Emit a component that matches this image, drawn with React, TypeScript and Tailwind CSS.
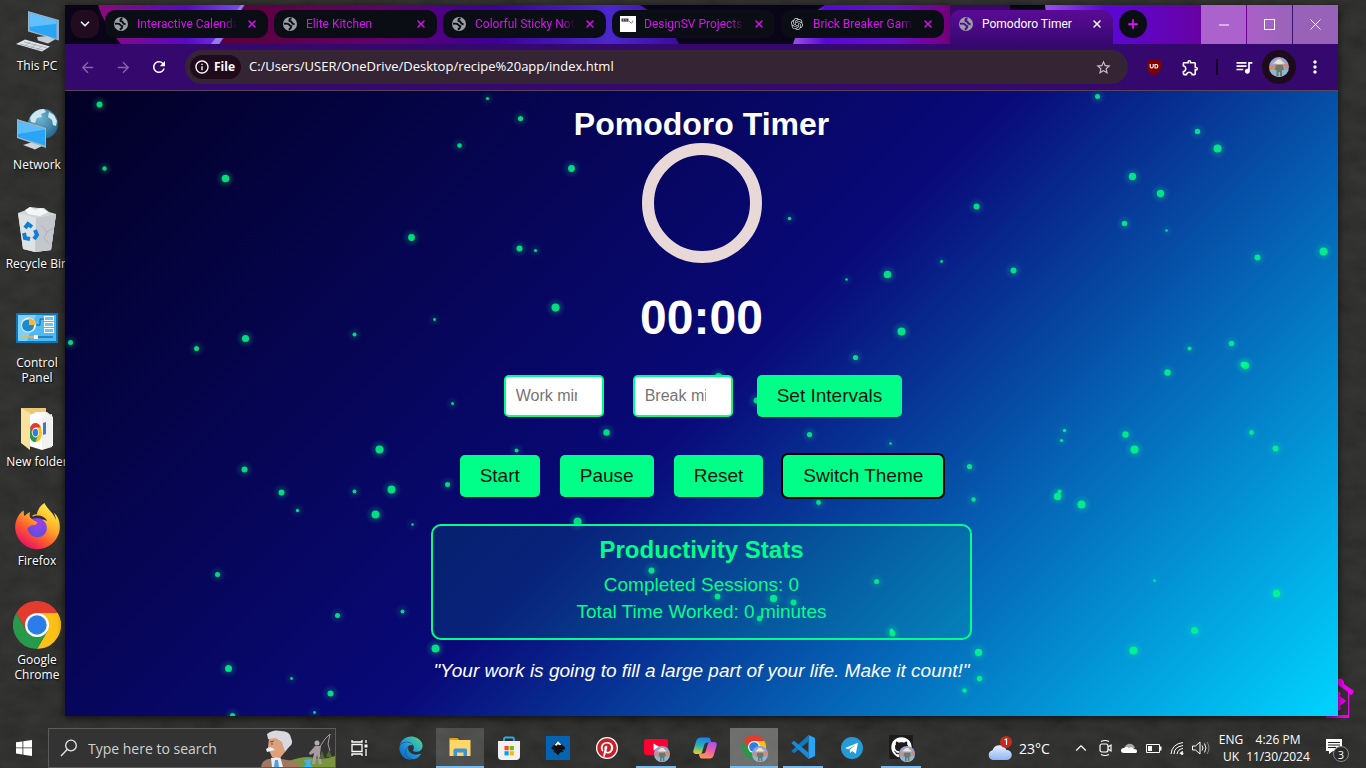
import React from "react";
import {
  MdArrowBack,
  MdArrowForward,
  MdRefresh,
  MdStarBorder,
  MdOutlineExtension,
  MdQueueMusic,
  MdMoreVert,
  MdInfoOutline,
} from "react-icons/md";
import { FaEdge, FaFirefoxBrowser, FaGithub, FaPinterest } from "react-icons/fa";
import { SiOpenai } from "react-icons/si";
import { ChevronDown, ChevronUp, Minus, Plus, Square, X } from "lucide-react";

/* ---------- Shared drawings ---------- */

function ChromeLogo({ className }: { className: string }) {
  return (
    <svg viewBox="0 0 48 48" className={className} aria-hidden="true">
      <path d="M3.2 12A24 24 0 0 1 44.8 12L24 12 13.6 30Z" fill="#e33b2e" />
      <path d="M44.8 12A24 24 0 0 1 24 48L34.4 30 24 12Z" fill="#fbc116" />
      <path d="M24 48A24 24 0 0 1 3.2 12L13.6 30 34.4 30Z" fill="#27994a" />
      <circle cx="24" cy="24" r="12" fill="#fff" />
      <circle cx="24" cy="24" r="9.7" fill="#2b7de9" />
    </svg>
  );
}

function Avatar({ className }: { className: string }) {
  return (
    <svg viewBox="0 0 20 20" className={className} aria-hidden="true">
      <defs>
        <clipPath id="avatarClip">
          <circle cx="10" cy="10" r="10" />
        </clipPath>
      </defs>
      <g clipPath="url(#avatarClip)">
        <rect width="20" height="20" fill="#94a3d8" />
        <rect y="13" width="20" height="7" fill="#8fb5cf" />
        <ellipse cx="3.5" cy="10" rx="3" ry="2" fill="#e08a58" />
        <ellipse cx="17" cy="9" rx="2.5" ry="2" fill="#e08a58" />
        <path d="M7 8h6.500l1.500 5h-2v6h-2v-4h-1.500v4h-2v-6h-2z" fill="#6b7a68" />
        <path d="M8 5.500h4v2.500H8z" fill="#c79c76" />
        <path d="M3.500 6.200C6 5.500 7.500 4.500 8 2.500h4c.5 2 2 3 4.500 3.700-3 1-10 1-13 0z" fill="#f0e2c8" />
      </g>
    </svg>
  );
}

/* ---------- Desktop icons ---------- */

function ThisPcIcon() {
  return (
    <svg viewBox="0 0 48 48" className="size-12" aria-hidden="true">
      <path d="M15 4l31 9v20.500L15 24.500z" fill="#9db4c6" />
      <path d="M16.500 5.500l27 8.300v18L16.500 23.500z" fill="#2aa5f5" />
      <path d="M16.500 5.500l27 8.300v3L16.500 20z" fill="#63c0fa" />
      <path d="M24 30l10-1 8 3.500-7 4-10-3z" fill="#c3ccd6" />
      <path d="M3 37l9-4.500 25 7-8 5z" fill="#dfe3e8" />
      <path d="M7 37l23 6M11 35l23 6M12 39l5-4M18 41l5-4M24 43l5-4" stroke="#9aa3ad" strokeWidth="0.800" />
    </svg>
  );
}

function NetworkIcon() {
  return (
    <svg viewBox="0 0 48 48" className="size-12" aria-hidden="true">
      <defs>
        <radialGradient id="globe" cx="0.400" cy="0.300" r="0.800">
          <stop offset="0" stopColor="#6fb6d2" />
          <stop offset="1" stopColor="#1d5f88" />
        </radialGradient>
      </defs>
      <circle cx="30" cy="18" r="15" fill="url(#globe)" />
      <path d="M17 12c3-6 9-9 14-9l2 3-5 2 1 3-5 1-2 5-4-1zM36 6l5 3 3 6-1 5-3-1-1-5-4-3z" fill="#cfe8f0" />
      <path d="M4 13l29 9v20L4 32z" fill="#9db4c6" />
      <path d="M5 15l27 8.500v16L5 31z" fill="#2aa5f5" />
      <path d="M5 15l27 8.500L5 28z" fill="#5cbcf9" />
      <path d="M10 39l8-2.500 11 3.500-7 3.500z" fill="#cdd4dc" />
    </svg>
  );
}

function RecycleIcon() {
  return (
    <svg viewBox="0 0 48 48" className="size-12" aria-hidden="true">
      <path d="M5 8l8-3 4-3 8 1 6 0 5 4 7 2-5 36-16 2-12-3z" fill="#d3d6d9" />
      <path d="M5 8l18 5 20-4-5 36-16 2-12-3z" fill="#dfe2e5" />
      <path d="M23 13l20-4-5 36-16 2z" fill="#c4c8cc" />
      <path d="M12 5l5-3 5 3 6-2 7 4-8 4-12-2z" fill="#f5f6f7" />
      <path d="M28 20l6 7-3 6 5 6M34 27l6-4" stroke="#adb3b9" fill="none" />
      <g fill="none" stroke="#0e7fd6" strokeWidth="4">
        <path d="M12 23l3-4 4 3" />
        <path d="M22 25l2 5-3 4" />
        <path d="M17 34l-5-1-1-5" />
      </g>
    </svg>
  );
}

function ControlPanelIcon() {
  return (
    <svg viewBox="0 0 48 48" className="size-12" aria-hidden="true">
      <rect x="3" y="9" width="42" height="30" fill="#0f76b6" />
      <rect x="5" y="11" width="38" height="26" fill="#4fb9f1" />
      <path d="M5 11h18L14 37H5z" fill="#7fd0f8" />
      <circle cx="15.500" cy="21" r="7.500" fill="#e8f6fd" />
      <circle cx="15" cy="21.500" r="6" fill="#1b8ad0" />
      <path d="M16 21v-7a7 7 0 0 1 6.500 7z" fill="#ffb52e" />
      <path d="M23 21h4v-6h4" stroke="#0f5f9a" fill="none" />
      <g fill="#fff">
        <rect x="31" y="12" width="10" height="5" />
        <rect x="31" y="18" width="10" height="5" />
        <rect x="31" y="24" width="10" height="5" />
      </g>
      <g fill="#6fc4f2">
        <rect x="32" y="13" width="8" height="3" />
        <rect x="32" y="19" width="8" height="3" />
        <rect x="32" y="25" width="8" height="3" />
      </g>
      <path d="M9 33h12" stroke="#ffb52e" strokeWidth="1.500" />
      <path d="M21 33h19" stroke="#0f5f9a" strokeWidth="1.200" />
      <rect x="21" y="31" width="4" height="4" fill="#fff" />
    </svg>
  );
}

function FolderIcon() {
  return (
    <svg viewBox="0 0 48 48" className="size-12" aria-hidden="true">
      <path d="M8 5h25v34H8z" fill="#e9c978" />
      <path d="M22 9h12l6 5v29H22z" fill="#f7f7f5" />
      <path d="M16 12l9-3 4 5v33l-13-4z" fill="#fff" />
      <path d="M29 14l10-3v33l-10 3z" fill="#f1f1ef" />
      <path d="M30 20l3-1v12l-3 1z" fill="#3f78c6" />
      <g transform="translate(16 20) scale(0.270 0.400)">
        <path d="M3.200 12A24 24 0 0 1 44.800 12L24 12 13.600 30Z" fill="#e33b2e" />
        <path d="M44.800 12A24 24 0 0 1 24 48L34.400 30 24 12Z" fill="#fbc116" />
        <path d="M24 48A24 24 0 0 1 3.200 12L13.600 30 34.400 30Z" fill="#27994a" />
        <circle cx="24" cy="24" r="12" fill="#fff" />
        <circle cx="24" cy="24" r="9.700" fill="#2b7de9" />
      </g>
      <path d="M8 5l9 5v37l-9-7z" fill="#fbe29c" />
    </svg>
  );
}

function FirefoxIcon() {
  return (
    <span className="grid size-12 place-items-center">
      <svg viewBox="0 0 48 48" className="col-start-1 row-start-1 size-12" aria-hidden="true">
        <defs>
          <linearGradient id="foxFill" x1="0.850" y1="0.100" x2="0.250" y2="1">
            <stop offset="0" stopColor="#fff04a" />
            <stop offset="0.350" stopColor="#ffb02a" />
            <stop offset="0.650" stopColor="#ff5a2f" />
            <stop offset="1" stopColor="#e60a6a" />
          </linearGradient>
          <radialGradient id="foxCore" cx="0.600" cy="0.200" r="0.900">
            <stop offset="0" stopColor="#a33be8" />
            <stop offset="1" stopColor="#4457d8" />
          </radialGradient>
        </defs>
        <circle cx="24" cy="27" r="11" fill="url(#foxCore)" />
      </svg>
      <FaFirefoxBrowser className="col-start-1 row-start-1 size-[47px]" fill="url(#foxFill)" />
    </span>
  );
}

const desktopIcons: { label: string; icon: React.ReactNode }[] = [
  { label: "This PC", icon: <ThisPcIcon /> },
  { label: "Network", icon: <NetworkIcon /> },
  { label: "Recycle Bin", icon: <RecycleIcon /> },
  { label: "Control Panel", icon: <ControlPanelIcon /> },
  { label: "New folder", icon: <FolderIcon /> },
  { label: "Firefox", icon: <FirefoxIcon /> },
  { label: "Google Chrome", icon: <ChromeLogo className="size-12" /> },
];

function DesktopColumn() {
  return (
    <aside className="flex w-[65px] shrink-0 flex-col overflow-hidden">
      {desktopIcons.map((item) => (
        <div key={item.label} className="flex h-[99px] w-[74px] shrink-0 flex-col items-center gap-[3px] pt-[7px]">
          {item.icon}
          <span
            className={
              "text-center text-[12px] leading-[15px] text-white [text-shadow:1px_1px_2px_#000] " +
              (item.label === "Control Panel" || item.label === "Google Chrome" ? "w-12" : "whitespace-nowrap")
            }
          >
            {item.label}
          </span>
        </div>
      ))}
    </aside>
  );
}

/* ---------- Browser window ---------- */

function GlobeFavicon({ land }: { land: string }) {
  return (
    <svg viewBox="0 0 16 16" className="size-4 shrink-0" fill="none" stroke={land} aria-hidden="true">
      <circle cx="8" cy="8" r="7" fill="#9b9da6" stroke="none" />
      <path d="M9.500 2.200Q6.800 3 7.600 5q1.400.2 2.200 1.400.4 1.600 2.800 1.800" strokeWidth="2" />
      <path d="M2 7.800q4-.6 5.400 1 .6 1.200 2 1.400-.2 2.400-2.600 3.400" strokeWidth="1.900" />
    </svg>
  );
}

function DesignFavicon() {
  return (
    <svg viewBox="0 0 16 16" className="size-4 shrink-0" aria-hidden="true">
      <rect width="16" height="16" fill="#fff" />
      <path d="M1.500 2.500h7v3.200h-7z" fill="#4a3f52" />
      <path d="M3.500 2.500v3.200M6 2.500v3.200" stroke="#c8a8c8" strokeWidth="0.700" />
      <path d="M9 5l2.500 2.500L13 4.500" stroke="#a08ab0" fill="none" />
    </svg>
  );
}

const globeIcon = <GlobeFavicon land="#0a0d14" />;

const tabs: { title: string; icon: React.ReactNode }[] = [
  { title: "Interactive Calendar", icon: globeIcon },
  { title: "Elite Kitchen", icon: globeIcon },
  { title: "Colorful Sticky Notes", icon: globeIcon },
  { title: "DesignSV Projects", icon: <DesignFavicon /> },
  { title: "Brick Breaker Game", icon: <SiOpenai className="mx-[2px] size-3 shrink-0 text-[#d8d8d8]" /> },
];

function TabStripArt() {
  return (
    <svg className="absolute inset-0 h-full w-full" viewBox="0 0 1273 39" preserveAspectRatio="none" aria-hidden="true">
      <defs>
        <linearGradient id="stripA" x1="0" x2="1">
          <stop offset="0" stopColor="#8c0a78" />
          <stop offset="0.600" stopColor="#5a08c8" />
          <stop offset="1" stopColor="#7a50f0" />
        </linearGradient>
        <linearGradient id="stripB" x1="0" x2="1">
          <stop offset="0" stopColor="#5c0036" />
          <stop offset="0.350" stopColor="#62006c" />
          <stop offset="0.600" stopColor="#3c0098" />
          <stop offset="0.850" stopColor="#4a28cc" />
          <stop offset="1" stopColor="#3c0aa0" />
        </linearGradient>
        <linearGradient id="stripC" x1="0" x2="1">
          <stop offset="0" stopColor="#9a50e8" />
          <stop offset="0.180" stopColor="#5608d8" />
          <stop offset="0.550" stopColor="#6410c8" />
          <stop offset="0.800" stopColor="#780090" />
          <stop offset="1" stopColor="#5c0030" />
        </linearGradient>
        <linearGradient id="stripD" x1="0" x2="1">
          <stop offset="0" stopColor="#9a50f0" />
          <stop offset="0.200" stopColor="#5a08d8" />
          <stop offset="0.600" stopColor="#6a0098" />
          <stop offset="1" stopColor="#780070" />
        </linearGradient>
      </defs>
      <rect width="1273" height="39" fill="#0a0418" />
      <path d="M33 0H180L155 39H56Q38 18 33 0z" fill="url(#stripA)" />
      <path d="M179 0l-25 39h-8l30-39z" fill="#9a78f0" />
      <path d="M180 0H575Q604 18 614 39H155z" fill="url(#stripB)" />
      <path d="M728 39Q735 15 760 0H910L890 39z" fill="url(#stripC)" />
      <path d="M885 0h60v39h-60z" fill="#3a0668" />
      <path d="M980 0H1273V39H985z" fill="url(#stripD)" />
      <path d="M1183 0h90v39h-70Q1196 14 1183 0z" fill="#3c1470" />
    </svg>
  );
}

function TabStrip() {
  return (
    <div className="relative h-[39px] overflow-hidden">
      <TabStripArt />
      <div className="relative flex h-full pl-[6px]">
        <button
          type="button"
          aria-label="Search tabs"
          className="mt-[5px] mr-[6px] grid size-7 shrink-0 place-items-center rounded-[10px] bg-[#210b1e] text-[#d9f3ee]"
        >
          <ChevronDown className="size-[14px]" strokeWidth={3} />
        </button>
        {tabs.map((tab) => (
          <div
            key={tab.title}
            className="mt-[5px] mr-[6px] flex h-7 w-[163px] min-w-0 items-center rounded-[10px] bg-[#0a0d14] px-2 text-[#d511ef]"
          >
            {tab.icon}
            <span className="ml-2 w-[100px] overflow-hidden font-[Roboto,sans-serif] text-[12px] whitespace-nowrap [mask-image:linear-gradient(to_right,black_86%,transparent)]">
              {tab.title}
            </span>
            <button type="button" aria-label={"Close " + tab.title} className="ml-auto grid size-4 place-items-center">
              <X className="size-3" strokeWidth={3} />
            </button>
          </div>
        ))}
        <div className="mt-[5px] flex w-[163px] min-w-0 items-center rounded-t-[10px] bg-linear-to-b from-[#5c0a96] to-[#370872] px-2 pb-[6px] text-white">
          <GlobeFavicon land="#4e0a88" />
          <span className="ml-2 font-[Roboto,sans-serif] text-[12px] whitespace-nowrap">Pomodoro Timer</span>
          <button type="button" aria-label="Close Pomodoro Timer" className="ml-auto grid size-4 place-items-center">
            <X className="size-3" strokeWidth={3} />
          </button>
        </div>
        <button
          type="button"
          aria-label="New tab"
          className="mt-[5px] ml-[6px] grid size-7 shrink-0 place-items-center rounded-full bg-[#0a0d14] text-[#e012f0]"
        >
          <Plus className="size-[14px]" strokeWidth={3} />
        </button>
        <div className="ml-auto flex gap-px text-white">
          <button type="button" aria-label="Minimize" className="grid w-[45px] place-items-center bg-[#ac62cc]">
            <Minus className="size-4" strokeWidth={1.5} />
          </button>
          <button type="button" aria-label="Maximize" className="grid w-[45px] place-items-center bg-linear-to-r from-[#ab5fc8] to-[#9864b8]">
            <svg viewBox="0 0 11 11" className="size-[11px]" aria-hidden="true">
              <rect x="0.5" y="0.5" width="10" height="10" fill="none" stroke="#fff" />
            </svg>
          </button>
          <button type="button" aria-label="Close" className="grid w-[45px] place-items-center bg-[#9862b9]">
            <svg viewBox="0 0 11 11" className="size-[11px]" aria-hidden="true">
              <path d="M0.500 0.500l10 10M10.500 0.500l-10 10" stroke="#fff" />
            </svg>
          </button>
        </div>
      </div>
    </div>
  );
}

function Toolbar() {
  return (
    <div className="flex h-[47px] items-center border-b border-[#56465c] bg-[#35086d] px-1 text-white">
      <button type="button" aria-label="Back" className="grid w-9 place-items-center text-[#8466a6]">
        <MdArrowBack className="size-[17px]" />
      </button>
      <button type="button" aria-label="Forward" className="grid w-9 place-items-center text-[#8466a6]">
        <MdArrowForward className="size-[17px]" />
      </button>
      <button type="button" aria-label="Reload" className="grid w-9 place-items-center">
        <MdRefresh className="size-[18px]" />
      </button>
      <div className="ml-2 flex h-[34px] min-w-0 flex-1 items-center rounded-full bg-[#352534] pr-4 pl-[5px]">
        <span className="flex h-6 w-[51px] items-center gap-1 rounded-full bg-[#200b1c] pl-1 text-[12px] font-bold">
          <MdInfoOutline className="size-4" />
          File
        </span>
        <input
          type="text"
          aria-label="Address"
          readOnly
          value="C:/Users/USER/OneDrive/Desktop/recipe%20app/index.html"
          className="ml-2 min-w-0 flex-1 bg-transparent text-[13px] outline-none"
        />
        <button type="button" aria-label="Bookmark this page">
          <MdStarBorder className="size-[17px] text-[#c9c0c8]" />
        </button>
      </div>
      <button type="button" aria-label="uBlock" className="ml-2 grid w-9 place-items-center">
        <svg viewBox="0 0 16 16" className="size-4" aria-hidden="true">
          <path d="M8 0l7 2v6c0 4-3 6.500-7 8-4-1.500-7-4-7-8V2z" fill="#800000" />
          <path d="M4.200 5v2.500q0 1.500 1.500 1.500T7.200 7.500V5" fill="none" stroke="#fff" strokeWidth="1.100" />
          <path d="M9 5.500h1.200q1.700 0 1.700 1.700T10.200 9H9z" fill="none" stroke="#fff" strokeWidth="1.100" />
        </svg>
      </button>
      <button type="button" aria-label="Extensions" className="grid w-9 place-items-center">
        <MdOutlineExtension className="size-[19px]" />
      </button>
      <span className="mx-2 h-4 w-[2px] bg-[#100420]" />
      <button type="button" aria-label="Media controls" className="grid w-9 place-items-center">
        <MdQueueMusic className="size-5" />
      </button>
      <button type="button" aria-label="Profile" className="grid size-[34px] place-items-center rounded-full bg-[#1d0b1a]">
        <Avatar className="size-5" />
      </button>
      <button type="button" aria-label="Menu" className="grid w-[38px] place-items-center">
        <MdMoreVert className="size-5" />
      </button>
    </div>
  );
}

/* ---------- Pomodoro page ---------- */

const particles: [number, number, number][] = [
  [34, 13, 3], [422, 7, 1.6], [455, 27, 2.6], [394, 54, 2.3], [39, 77, 2.2], [506, 77, 3.4], [160, 87, 3.8],
  [346, 146, 3.4], [454, 157, 3], [470, 159, 1.6], [490, 216, 4], [369, 228, 1.4], [289, 243, 2], [180, 247, 3.6],
  [131, 257, 2.5], [5, 251, 2.5], [387, 312, 1.5], [314, 358, 4], [179, 378, 3], [216, 401, 3], [232, 419, 1.7],
  [289, 400, 2], [326, 398, 4], [382, 393, 2.5], [451, 359, 2], [310, 423, 4], [347, 433, 1.3], [512, 430, 4],
  [541, 341, 3.2], [152, 483, 2.5], [272, 524, 2.5], [337, 520, 2], [370, 557, 4], [163, 577, 3.5], [226, 587, 1.4],
  [265, 602, 3], [167, 624, 2.6], [249, 621, 1.4], [1032, 5, 2.5], [1132, 40, 2.7], [1152, 57, 4], [1067, 85, 3.7],
  [1095, 102, 3.7], [911, 115, 3], [724, 127, 1.8], [1059, 132, 2.7], [1101, 139, 1.3], [1192, 166, 3],
  [1258, 160, 4], [876, 170, 1.4], [948, 179, 3], [822, 183, 3.8], [781, 188, 1.3], [836, 240, 4], [790, 266, 2.6],
  [1124, 257, 2], [1166, 252, 2.8], [1102, 281, 3.2], [1178, 273, 3], [1180, 274, 3.6], [653, 285, 3.6],
  [691, 309, 3], [744, 343, 2.6], [825, 352, 1.3], [999, 339, 1.7], [996, 349, 1.6], [1060, 343, 3.2],
  [1069, 358, 4.1], [1186, 341, 2.4], [1210, 357, 3], [904, 375, 2.6], [908, 408, 2.2], [992, 405, 3.7],
  [994, 400, 2], [1016, 413, 4], [1089, 489, 1.3], [1211, 502, 3.7], [1129, 539, 3.5], [1068, 559, 4],
  [913, 561, 3.7], [914, 587, 2.7], [899, 599, 2.3], [586, 479, 3.1], [652, 505, 2.9], [708, 507, 3.7],
  [728, 511, 3], [694, 527, 2.7], [811, 490, 2.5], [826, 539, 2], [827, 542, 3], [753, 411, 2.4],
];

function Particles() {
  return (
    <svg className="pointer-events-none absolute inset-0 h-full w-full" aria-hidden="true">
      <defs>
        <radialGradient id="glow">
          <stop offset="0" stopColor="#00ff88" stopOpacity="0.400" />
          <stop offset="1" stopColor="#00ff88" stopOpacity="0" />
        </radialGradient>
      </defs>
      <g transform="translate(0.5 0.5)">
        {particles.map(([x, y, r]) => (
          <g key={x + "-" + y}>
            <circle cx={x} cy={y} r={r + 6} fill="url(#glow)" opacity={r / 5} />
            <circle cx={x} cy={y} r={r} fill="#00ff88" opacity="0.820" />
          </g>
        ))}
      </g>
    </svg>
  );
}

const actionButton = "h-[42px] rounded-[5px] bg-[#00ff88] px-5 text-[19px] whitespace-nowrap text-[#071410]";
const numberField =
  "h-[42px] w-[100px] rounded-[5px] border-2 border-[#00ff88] bg-white px-[10px] text-[16px] text-black outline-none placeholder:text-[#757575]";

function PomodoroPage() {
  return (
    <main className="relative flex-1 overflow-hidden bg-[linear-gradient(135deg,#020024_0%,#090979_50%,#00d4ff_100%)] font-['Liberation_Sans',Arial,sans-serif] text-white">
      <Particles />
      <div className="relative flex flex-col items-center pt-[14px]">
        <h1 className="text-[32px] leading-[38px] font-bold">Pomodoro Timer</h1>
        <div className="size-[120px] rounded-full border-12 border-[#e8d8d8]" role="progressbar" aria-label="Session progress" />
        <div className="mt-7 text-[48px] leading-[54px] font-bold">00:00</div>
        <form className="mt-[30px] flex items-center gap-6 pl-[3px]">
          <input type="number" aria-label="Work minutes" placeholder="Work minutes" className={numberField + " mr-[5px]"} />
          <input type="number" aria-label="Break minutes" placeholder="Break minutes" className={numberField} />
          <button type="button" className={actionButton}>
            Set Intervals
          </button>
        </form>
        <div className="mt-[38px] flex gap-5">
          <button type="button" className={actionButton}>
            Start
          </button>
          <button type="button" className={actionButton}>
            Pause
          </button>
          <button type="button" className={actionButton}>
            Reset
          </button>
          <button type="button" className={actionButton + " ring-2 ring-black"}>
            Switch Theme
          </button>
        </div>
        <section className="mt-[27px] w-[541px] max-w-full rounded-[10px] border-2 border-[#00ff88] bg-[#00ff88]/10 pt-[10px] pb-[13px] text-center text-[#00ff88]">
          <h2 className="text-[24px] leading-7 font-bold">Productivity Stats</h2>
          <div className="mt-[7px] text-[19px] leading-[27px]">
            <p>Completed Sessions: 0</p>
            <p>Total Time Worked: 0 minutes</p>
          </div>
        </section>
        <p className="mt-5 text-[19px] leading-[22px] italic">
          "Your work is going to fill a large part of your life. Make it count!"
        </p>
      </div>
    </main>
  );
}

/* ---------- Taskbar ---------- */

function SearchArt() {
  return (
    <svg viewBox="0 0 74 38" className="h-[38px] w-[74px] shrink-0" aria-hidden="true">
      <path d="M28 38V32q16-6 26-3 10 2 20-2v11z" fill="#7c9440" />
      <path d="M40 38q8-2 4-5t8-3q-6 4 0 8z" fill="#3cb4e8" />
      <path d="M0 38q1-7 8-8l8-1 10 2q10 1 13 7z" fill="#a07862" />
      <path d="M10 29l9-2 3 11h-11z" fill="#e8eef4" />
      <path d="M14 31l3 0 1 7h-5z" fill="#5c9cd8" />
      <path d="M8 9q8-6 15 2l1 12-5 6-8-1-4-9z" fill="#dca07c" />
      <path d="M6 5Q12 0 20 2q9 0 10 7 3 6-2 9l-4 5-3-10-6-4-8 1z" fill="#d8d8de" />
      <path d="M9 13l4-1M10 15h2" stroke="#6a4a40" />
      <path d="M5 20q5-4 9 1l-4 1-4 1z" fill="#f0f0f0" />
      <circle cx="56" cy="14" r="2.500" fill="#b8acb0" />
      <path d="M54 17h6l-1 8 2 10h-3l-2-9-2 9h-3l2-11-4 2-1-2z" fill="#a89ca0" />
      <path d="M58 19l6-9 5-5-2 10 2 7" fill="none" stroke="#a89ca0" />
      <path d="M58 30l3-8 3 8zM65 28l3-7 3 7z" fill="#4f6a34" />
    </svg>
  );
}

function StoreIcon() {
  return (
    <svg viewBox="0 0 24 24" className="size-6" aria-hidden="true">
      <path d="M7 6V3q0-1.500 1.500-1.500h7Q17 1.500 17 3v3" fill="none" stroke="#2fa9e6" strokeWidth="1.800" />
      <path d="M1 5h22v15q0 4-4 4H5q-4 0-4-4z" fill="#f1f1f1" />
      <path d="M7.500 10h4.200v4.200H7.500z" fill="#f25022" />
      <path d="M12.700 10h4.200v4.200h-4.200z" fill="#7fba00" />
      <path d="M7.500 15.200h4.200v4.200H7.500z" fill="#00a4ef" />
      <path d="M12.700 15.200h4.200v4.200h-4.200z" fill="#ffb900" />
    </svg>
  );
}

function ExplorerIcon() {
  return (
    <svg viewBox="0 0 24 24" className="size-6" aria-hidden="true">
      <path d="M1.500 3h8l2 2.500h-10z" fill="#e0a010" />
      <path d="M1.500 5h21v16h-21z" fill="#ffd768" />
      <path d="M5.500 21v-6q0-1.500 1.500-1.500h10.500q1.500 0 1.500 1.500v6h-3.500v-3.500h-6.500V21z" fill="#3c94d8" />
    </svg>
  );
}

function InkscapeIcon() {
  return (
    <svg viewBox="0 0 24 24" className="size-6" aria-hidden="true">
      <rect width="24" height="24" fill="#0663b2" />
      <path d="M12 4.500l7 7q1 2-3 2.500l2 1.500-4 1-2 3-2-2.500-3-1.500 2-1.500q-4-.5-3.500-2.500z" fill="#111" />
      <path d="M12 5l3.500 3.500-2 .8-1.500-1-1.500 1.500L8.500 9z" fill="#ececec" />
    </svg>
  );
}

function YoutubeIcon() {
  return (
    <svg viewBox="0 0 24 24" className="size-6" aria-hidden="true">
      <rect x="0" y="4" width="24" height="16" rx="3" fill="#ff0033" />
      <path d="M9.500 8.500l6 3.500-6 3.500z" fill="#fff" />
    </svg>
  );
}

function CopilotIcon() {
  return (
    <svg viewBox="0 0 24 24" className="size-6" aria-hidden="true">
      <defs>
        <linearGradient id="copA" x1="0.500" y1="0" x2="0.300" y2="1">
          <stop offset="0" stopColor="#1a7ef0" />
          <stop offset="0.500" stopColor="#28b4b4" />
          <stop offset="1" stopColor="#e8d020" />
        </linearGradient>
        <linearGradient id="copB" x1="0.600" y1="0" x2="0.300" y2="1">
          <stop offset="0" stopColor="#b050f0" />
          <stop offset="0.500" stopColor="#f060a0" />
          <stop offset="1" stopColor="#ff9a50" />
        </linearGradient>
      </defs>
      <path d="M7 1.500h8q2 0 2.500 2l.8 3H14q-2 0-2.600 2L9 16.500Q8.500 18 7 18H3Q-.5 18 .5 14L3.500 4Q4.500 1.500 7 1.500z" fill="url(#copA)" />
      <path d="M17 22.500H9q-2 0-2.500-2l-.8-3H10q2 0 2.600-2L15 7.500Q15.500 6 17 6h4q3.500 0 2.500 4l-3 10q-1 2.500-3.500 2.500z" fill="url(#copB)" />
    </svg>
  );
}

function VsCodeIcon() {
  return (
    <svg viewBox="0 0 24 24" className="size-6" aria-hidden="true">
      <path d="M17.500 0L24 3v18l-6.500 3z" fill="#2aa4f4" />
      <path d="M17.500 0v6.500L3 18.200.3 16z" fill="#0f78c0" />
      <path d="M17.500 24v-6.500L3 5.800.3 8z" fill="#1a8ad6" />
    </svg>
  );
}

function TelegramIcon() {
  return (
    <svg viewBox="0 0 24 24" className="size-[22px]" aria-hidden="true">
      <circle cx="12" cy="12" r="12" fill="#259cd8" />
      <path d="M4.500 12L18.500 6.300l-2.300 12-4-3-2.200 2.200-.5-3.500 6-5.400-7.500 4.700z" fill="#fff" />
    </svg>
  );
}

function WithAvatar({ children }: { children: React.ReactNode }) {
  return (
    <span className="relative">
      {children}
      <Avatar className="absolute -right-[2px] -bottom-[3px] size-4" />
    </span>
  );
}

const apps: { name: string; icon: React.ReactNode; cell: string }[] = [
  { name: "Edge", icon: <FaEdge className="size-6" fill="url(#edgeFill)" />, cell: "w-12" },
  { name: "File Explorer", icon: <ExplorerIcon />, cell: "w-12 bg-white/15 border-b-2 border-[#76b9ed]" },
  { name: "Store", icon: <StoreIcon />, cell: "w-12" },
  { name: "Inkscape", icon: <InkscapeIcon />, cell: "w-12" },
  {
    name: "Pinterest",
    icon: (
      <span className="grid size-[22px] place-items-center rounded-full bg-white">
        <FaPinterest className="size-5 text-[#cb1f27]" />
      </span>
    ),
    cell: "w-12",
  },
  { name: "YouTube", icon: <WithAvatar><YoutubeIcon /></WithAvatar>, cell: "mx-1 w-10 border-b-2 border-[#76b9ed]" },
  { name: "Copilot", icon: <CopilotIcon />, cell: "w-12" },
  {
    name: "Chrome",
    icon: <WithAvatar><ChromeLogo className="size-6" /></WithAvatar>,
    cell: "w-12 bg-white/30 border-b-2 border-[#76b9ed]",
  },
  { name: "Visual Studio Code", icon: <VsCodeIcon />, cell: "mx-1 w-10 border-b-2 border-[#76b9ed]" },
  { name: "Telegram", icon: <TelegramIcon />, cell: "w-12" },
  {
    name: "GitHub Desktop",
    icon: (
      <WithAvatar>
        <span className="grid size-6 place-items-center bg-[#1c1a1a]">
          <FaGithub className="size-[21px] text-white" />
        </span>
      </WithAvatar>
    ),
    cell: "mx-1 w-10 border-b-2 border-[#76b9ed]",
  },
];

function Tray() {
  return (
    <div className="mr-[7px] ml-auto flex h-10 items-center text-[12px] text-white">
      <svg viewBox="0 0 26 26" className="size-[26px]" aria-hidden="true">
        <defs>
          <linearGradient id="cloud" x1="0" y1="0" x2="0" y2="1">
            <stop offset="0" stopColor="#e8f0ff" />
            <stop offset="1" stopColor="#8db4f0" />
          </linearGradient>
        </defs>
        <path d="M6 25a5 5 0 0 1-.5-9.800A7.500 7.500 0 0 1 19.500 15 5 5 0 0 1 20 25z" fill="url(#cloud)" />
        <circle cx="19" cy="7" r="6" fill="#c42b1c" />
        <path d="M17.500 5l2-1v6" fill="none" stroke="#fff" strokeWidth="1.200" />
      </svg>
      <span className="ml-[6px] w-[50px] text-[14px] whitespace-nowrap">23°C</span>
      <button type="button" aria-label="Show hidden icons" className="grid w-6 place-items-center">
        <ChevronUp className="size-[18px]" strokeWidth={1.5} />
      </button>
      <svg viewBox="0 0 24 24" className="size-6" fill="none" stroke="#fff" strokeWidth="1.200" aria-hidden="true">
        <rect x="7" y="8" width="8" height="8" rx="2" />
        <path d="M15 11l3-2v6l-3-2M8 5.500q4-2 8 0M8 18.500q4 2 8 0" />
      </svg>
      <svg viewBox="0 0 24 24" className="size-6" aria-hidden="true">
        <path d="M8 15q-2-5 3-7 5-1 7 4z" fill="#a8a8a8" />
        <path d="M7 17q-3 0-3-2.500T7 12q3-2 5 0 3-2 5 1 3 0 3 2.200T17.500 17z" fill="#fff" />
      </svg>
      <svg viewBox="0 0 24 24" className="size-6" aria-hidden="true">
        <path d="M5.500 8.500h13v8h-13z" fill="none" stroke="#fff" />
        <path d="M7 10h4v5H7zM19 10.500h1.500v4H19z" fill="#fff" />
      </svg>
      <svg viewBox="0 0 24 24" className="size-6" fill="none" stroke="#fff" aria-hidden="true">
        <path d="M6 18Q7 8 18 6.500M9 18q0-7 9-8.500M12 18q1-5 6-5.500M15 18q0-2 3-2.500" />
        <circle cx="17" cy="17.500" r="1" fill="#fff" />
      </svg>
      <svg viewBox="0 0 24 24" className="size-6" fill="none" stroke="#fff" aria-hidden="true">
        <path d="M3.500 10h3L11 6v12l-4.500-4h-3z" />
        <path d="M13 9.500q2 2.500 0 5M15.500 7.500q3 4.500 0 9" />
        <path d="M18 6q4 6 0 12" stroke="#888" />
      </svg>
      <div className="ml-1 w-7 text-center leading-[17px]">
        ENG
        <br />
        UK
      </div>
      <time className="w-[66px] text-center leading-[17px] whitespace-nowrap">
        4:26 PM
        <br />
        11/30/2024
      </time>
      <button type="button" aria-label="Notifications, 3 new" className="mr-2 ml-3 grid w-7 place-items-center">
        <svg viewBox="0 0 28 28" className="col-start-1 row-start-1 size-7" aria-hidden="true">
          <path d="M3 5h16v12H10l-4 3v-3H3z" fill="#fff" />
          <path d="M5 8.500h12M5 11h12M5 13.500h8" stroke="#222" />
          <circle cx="18" cy="20" r="7.500" fill="#2a2a2a" stroke="#8a8a8a" />
        </svg>
        <span className="col-start-1 row-start-1 pt-3 pl-2 text-[11px] leading-none">3</span>
      </button>
    </div>
  );
}

function Taskbar() {
  return (
    <footer className="relative mt-3 flex h-10 shrink-0 items-center">
      <svg className="absolute size-0" aria-hidden="true">
        <defs>
          <linearGradient id="edgeFill" x1="0" y1="1" x2="1" y2="0">
            <stop offset="0" stopColor="#0c59c0" />
            <stop offset="0.500" stopColor="#1f9de0" />
            <stop offset="1" stopColor="#5be070" />
          </linearGradient>
        </defs>
      </svg>
      <button type="button" aria-label="Start menu" className="grid h-10 w-12 place-items-center">
        <svg viewBox="0 0 16 16" className="size-4" fill="#fff" aria-hidden="true">
          <path d="M0 2.300l6.500-.9v6.100H0zM7.300 1.300L16 0v7.500H7.300zM0 8.300h6.500v6.200L0 13.600zM7.300 8.300H16V16l-8.700-1.300z" />
        </svg>
      </button>
      <label className="flex h-10 w-[288px] items-center border border-[#5c5c5c] bg-[#333333] pl-[11px]">
        <svg viewBox="0 0 18 18" className="size-[18px] shrink-0" fill="none" stroke="#e8e8e8" strokeWidth="1.300" aria-hidden="true">
          <circle cx="11" cy="6.500" r="5.300" />
          <path d="M7.200 10.500L1 17" />
        </svg>
        <input
          type="text"
          aria-label="Search"
          placeholder="Type here to search"
          className="ml-[10px] w-full min-w-0 bg-transparent text-[14px] outline-none placeholder:text-[#d0d0d0]"
        />
        <SearchArt />
      </label>
      <button type="button" aria-label="Task view" className="mr-[3px] grid h-10 w-12 place-items-center">
        <svg viewBox="0 0 18 16" className="h-4 w-[18px]" fill="none" stroke="#fff" strokeWidth="1.300" aria-hidden="true">
          <path d="M1 4.500h10v7H1zM1 0v2h10V0M1 16v-2h10v2M15 0v3M15 9v7" />
          <path d="M13.500 4.500h3v3h-3z" fill="#fff" stroke="none" />
        </svg>
      </button>
      <nav className="flex gap-px">
        {apps.map((app) => (
          <button key={app.name} type="button" aria-label={app.name} className={"grid h-10 place-items-center " + app.cell}>
            {app.icon}
          </button>
        ))}
      </nav>
      <Tray />
    </footer>
  );
}

/* ---------- Desktop ---------- */

export default function App() {
  return (
    <div className="relative flex min-h-screen flex-col overflow-hidden bg-[#272726] font-['Open_Sans','Noto_Sans',sans-serif]">
      <svg className="absolute inset-0 h-full w-full opacity-20" aria-hidden="true">
        <filter id="grain">
          <feTurbulence type="fractalNoise" baseFrequency="0.040 0.060" numOctaves="5" seed="7" />
          <feColorMatrix type="matrix" values="0.500 0 0 0 0 0.500 0 0 0 0 0.480 0 0 0 0 0 0 0 0 0.550" />
        </filter>
        <rect width="100%" height="100%" filter="url(#grain)" />
      </svg>
      <div className="relative flex flex-1">
        <DesktopColumn />
        <div className="relative mt-[5px] flex min-w-0 flex-1 flex-col shadow-[0_2px_8px_rgba(0,0,0,0.7)]">
          <TabStrip />
          <Toolbar />
          <PomodoroPage />
        </div>
        <div className="flex w-7 shrink-0 flex-col justify-end">
          <svg viewBox="0 0 28 42" className="h-[42px] w-7 overflow-visible" aria-hidden="true">
            <path d="M0 5q4-2 6 3l0 2 10 7-2 4-3-1v24H-12v-3H10V18L0 11z" fill="#f000f0" />
            <path d="M0 17l3 2-1 3 6 5-6 5 1 3-3 2z" fill="#f000f0" />
          </svg>
        </div>
      </div>
      <Taskbar />
    </div>
  );
}
